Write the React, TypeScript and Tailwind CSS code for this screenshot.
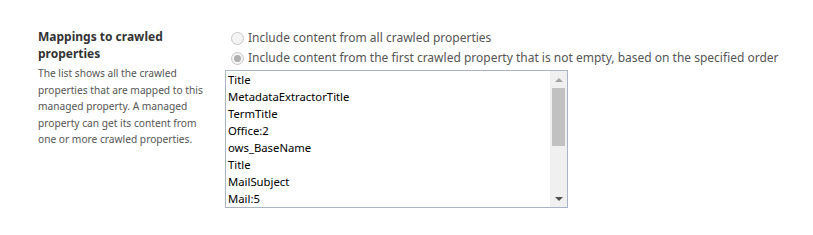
const items = ['Title', 'MetadataExtractorTitle', 'TermTitle', 'Office:2', 'ows_BaseName', 'Title', 'MailSubject', 'Mail:5'];

const Radio = ({ checked }: { checked?: boolean }) => (
  <span className="flex h-[13px] w-[13px] shrink-0 items-center justify-center rounded-full border border-[#c8c8c8] bg-[#f4f4f4]">
    {checked && <span className="h-[7px] w-[7px] rounded-full bg-[#b0b0b0]" />}
  </span>
);

const App = () => {
  return (
    <div className="h-[235px] w-[813px] bg-white pt-[28px] pl-[38px] font-['Noto_Sans',sans-serif] text-[#444]">
      <div className="flex">
        <div className="w-[187px] shrink-0">
          <h3 className="text-[12px] leading-[17px] font-bold text-[#333]">
            Mappings to crawled
            <br />
            properties
          </h3>
          <p className="mt-[3px] w-[172px] text-[10.2px] leading-[16.5px] text-[#555]">
            The list shows all the crawled properties that are mapped to this managed property. A managed property can get its content from one or more crawled properties.
          </p>
        </div>
        <div className="flex flex-col">
          <label className="flex h-[20px] items-center gap-[4px] pl-[6px] text-[12px] whitespace-nowrap text-[#555]">
            <Radio />
            Include content from all crawled properties
          </label>
          <label className="flex h-[20px] items-center gap-[4px] pl-[6px] text-[12px] whitespace-nowrap text-[#555]">
            <Radio checked />
            Include content from the first crawled property that is not empty, based on the specified order
          </label>
          <div className="mt-[2px] flex h-[138px] w-[343px] border border-[#a9b4c4] bg-white">
            <ul className="flex-1 overflow-hidden pl-[2px] text-[11.3px] leading-[17px] text-black">
              {items.map((it, i) => (
                <li key={i}>{it}</li>
              ))}
            </ul>
            <div className="flex w-[17px] flex-col items-center bg-[#f0f0f0]">
              <div className="flex h-[17px] items-center justify-center">
                <span className="h-0 w-0 border-x-[4px] border-b-[4px] border-x-transparent border-b-[#a3a3a3]" />
              </div>
              <div className="h-[58px] w-[13px] bg-[#c1c1c1]" />
              <div className="flex-1" />
              <div className="flex h-[17px] items-center justify-center">
                <span className="h-0 w-0 border-x-[4px] border-t-[4px] border-x-transparent border-t-[#505050]" />
              </div>
            </div>
          </div>
        </div>
      </div>
    </div>
  );
};

export default App;
